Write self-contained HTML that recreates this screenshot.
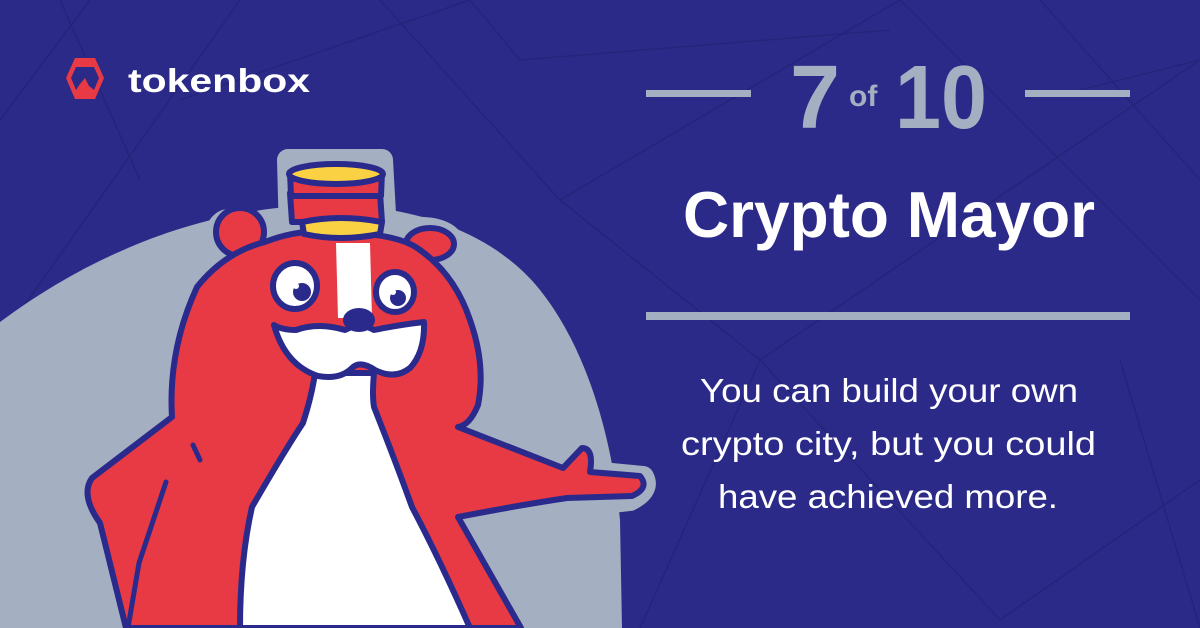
<!DOCTYPE html>
<html><head><meta charset="utf-8"><style>
html,body{margin:0;padding:0;width:1200px;height:628px;overflow:hidden;background:#2b2a88}
svg{display:block}
</style></head><body>
<svg width="1200" height="628" viewBox="0 0 1200 628" xmlns="http://www.w3.org/2000/svg" font-family="Liberation Sans, sans-serif">
<rect width="1200" height="628" fill="#2b2a88"/>
<g stroke="#23237a" stroke-width="1.5" fill="none" opacity="0.9">
<path d="M0 340 L240 0 M0 120 L90 0 M60 0 L140 180 M180 100 L470 0 M380 0 L560 200 L900 0 M560 200 L760 360 L1200 60 M760 360 L640 628 M760 360 L1000 620 M900 0 L1200 300 M1040 0 L1200 180 M1000 620 L1200 480 M1120 360 L1200 628 M470 0 L520 60 L890 30 M1080 90 L1200 60 M0 540 L80 628"/>
</g>
<path d="M0 322 C110 240 230 203 340 205 C430 208 500 240 540 290 C580 340 610 420 620 520 L622 628 L0 628 Z" fill="#a5afc2"/>
<!-- logo -->
<polygon points="75,58 95,58 104,78 95,99 75,99 66,78" fill="#e83a45"/>
<path d="M76 67 L94 67 L99 78 L94 90 L89 86 L85 78 L80 84 L76 90 L71 78 Z" fill="#2b2a88"/>
<text x="128" y="92" font-size="33" font-weight="bold" fill="#fff" textLength="182" lengthAdjust="spacingAndGlyphs">tokenbox</text>
<!-- bear halo -->
<g fill="#a5afc2" stroke="#a5afc2" stroke-width="22" stroke-linejoin="round">
<path d="M288 160 L382 160 L386 232 L405 228 Q455 225 455 250 L462 300 Q485 350 478 410 L460 428 L563 468 L584 447 Q595 450 590 472 L643 477 Q650 490 630 500 L458 520 L521 628 L126 628 L100 523 L84 490 L105 460 L172 417 Q170 340 197 287 L216 232 Q225 205 262 238 L290 236 Z"/>
</g>
<g stroke="#2a2a8c" stroke-width="6" stroke-linejoin="round" stroke-linecap="round">
<ellipse cx="240" cy="232" rx="24" ry="24" fill="#e83a45"/>
<ellipse cx="430" cy="244" rx="24" ry="16" fill="#e83a45"/>
<path d="M265 242 Q300 228 340 232 Q400 234 420 250 Q455 275 470 320 Q486 365 478 405 Q470 425 458 427 L563 468 L582 448 Q594 448 590 472 L640 476 Q650 488 632 496 L567 498 Q520 505 458 517 L521 628 L126 628 L100 523 Q80 495 92 478 L172 417 Q168 350 197 287 Q225 252 265 242 Z" fill="#e83a45"/>
<path d="M336 243 L370 243 L372 318 L338 318 Z" fill="#fff" stroke="none"/>
<path d="M315 373 L374 373 Q372 395 374 407 Q395 460 412 507 Q440 560 470 628 L240 628 Q240 560 252 507 Q285 450 303 423 Q312 395 315 373 Z" fill="#fff"/>
<ellipse cx="295" cy="286" rx="22" ry="23" fill="#fff"/>
<ellipse cx="395" cy="292" rx="19" ry="20" fill="#fff"/>
<path d="M274 325 Q282 330 296 330 Q318 322 345 330 Q360 322 374 330 Q398 325 424 322 Q425 352 410 368 Q395 380 375 370 Q360 360 352 368 Q340 380 318 376 Q285 365 274 325 Z" fill="#fff"/>
<path d="M290 193 L380 193 L382 222 L292 222 Z" fill="#e83a45"/>
<path d="M302 222 Q340 214 382 222 L380 234 Q340 242 304 234 Z" fill="#f9d142"/>
<path d="M290 172 L382 172 L381 196 L291 196 Z" fill="#e83a45"/>
<ellipse cx="336" cy="174" rx="47" ry="10" fill="#f9d142"/>
</g>
<g fill="#2a2a8c">
<circle cx="302" cy="292" r="9"/><circle cx="398" cy="298" r="8"/>
<ellipse cx="359" cy="320" rx="16" ry="12"/>
</g>
<circle cx="296" cy="286" r="3" fill="#fff"/><circle cx="393" cy="292" r="3" fill="#fff"/>
<path d="M166 482 L139 563 L128 628 M193 445 L200 460" stroke="#2a2a8c" stroke-width="5" fill="none" stroke-linecap="round"/>
<!-- right text -->
<rect x="646" y="90" width="105" height="7" fill="#a5afc2"/>
<rect x="1025" y="90" width="105" height="7" fill="#a5afc2"/>
<text x="790" y="128" font-size="90" font-weight="bold" fill="#a5afc2">7</text>
<text x="849" y="106" font-size="30" font-weight="bold" fill="#a5afc2">of</text>
<text x="895" y="128" font-size="90" font-weight="bold" fill="#a5afc2" textLength="92" lengthAdjust="spacingAndGlyphs">10</text>
<text x="683" y="237" font-size="65" font-weight="bold" fill="#fff" textLength="412" lengthAdjust="spacingAndGlyphs">Crypto Mayor</text>
<rect x="646" y="312" width="484" height="8" fill="#a5afc2"/>
<g font-size="33" fill="#fff">
<text x="700" y="402" textLength="378" lengthAdjust="spacingAndGlyphs">You can build your own</text>
<text x="681" y="455" textLength="415" lengthAdjust="spacingAndGlyphs">crypto city, but you could</text>
<text x="718" y="508" textLength="340" lengthAdjust="spacingAndGlyphs">have achieved more.</text>
</g>
</svg>
</body></html>
